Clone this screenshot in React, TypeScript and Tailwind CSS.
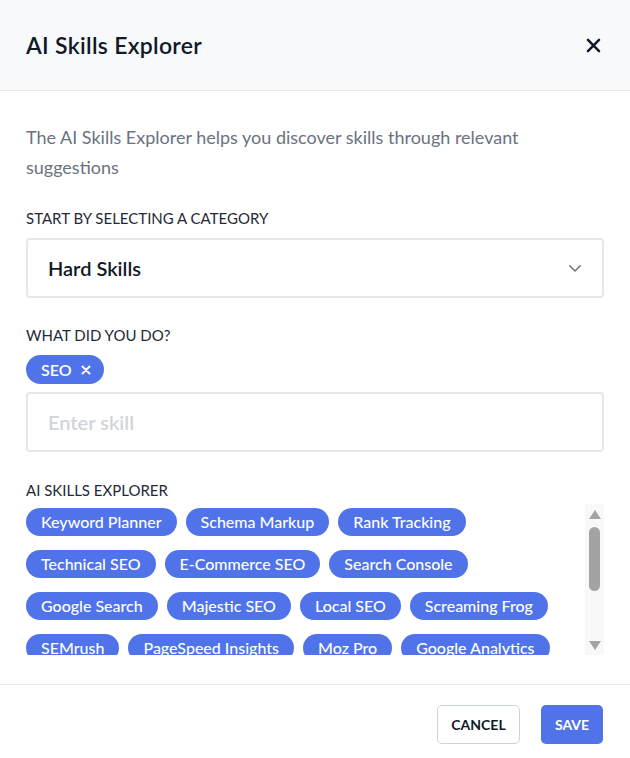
import { useState } from "react";

const suggestions = [
  "Keyword Planner",
  "Schema Markup",
  "Rank Tracking",
  "Technical SEO",
  "E-Commerce SEO",
  "Search Console",
  "Google Search",
  "Majestic SEO",
  "Local SEO",
  "Screaming Frog",
  "SEMrush",
  "PageSpeed Insights",
  "Moz Pro",
  "Google Analytics",
  "Link Building",
  "Content Strategy",
];

function CloseIcon({ className, strokeWidth = 3.2 }: { className?: string; strokeWidth?: number }) {
  return (
    <svg viewBox="0 0 24 24" fill="none" stroke="currentColor" strokeWidth={strokeWidth} strokeLinecap="round" className={className}>
      <path d="M5 5l14 14M19 5L5 19" />
    </svg>
  );
}

export default function App() {
  const [skills, setSkills] = useState<string[]>(["SEO"]);

  return (
    <div className="w-[630px] h-[758px] bg-white flex flex-col text-[#1f2937]" style={{ fontFamily: "Lato, 'Noto Sans', sans-serif" }}>
      {/* Header */}
      <div className="h-[91px] shrink-0 bg-[#f8f9fb] border-b border-[#e5e7eb] flex items-center justify-between pl-[26px] pr-[27px]">
        <h2 className="text-[23px] font-semibold text-[#111827] tracking-[0.3px]">AI Skills Explorer</h2>
        <button className="text-[#111827]">
          <CloseIcon className="w-[19px] h-[19px]" />
        </button>
      </div>

      {/* Body */}
      <div className="flex-1 px-[26px] pt-[31px] flex flex-col">
        <p className="text-[18px] leading-[30px] text-[#6b7280]">
          The AI Skills Explorer helps you discover skills through relevant suggestions
        </p>

        <label className="mt-[26px] text-[15px] leading-[20px] uppercase text-[#1f2937]">
          Start by selecting a category
        </label>
        <div className="mt-[10px] h-[60px] border-2 border-[#e5e7eb] rounded-[4px] flex items-center justify-between pl-[20px] pr-[18px]">
          <span className="text-[20px] font-semibold text-[#111827]">Hard Skills</span>
          <svg viewBox="0 0 24 24" fill="none" stroke="#6b7280" strokeWidth={2} strokeLinecap="round" strokeLinejoin="round" className="w-[18px] h-[18px]">
            <path d="M5 9l7 7 7-7" />
          </svg>
        </div>

        <label className="mt-[27px] text-[15px] leading-[20px] uppercase text-[#1f2937]">
          What did you do?
        </label>
        <div className="mt-[10px] flex gap-2">
          {skills.map((s) => (
            <span key={s} className="h-[29px] pl-[15px] pr-[12px] rounded-full bg-[#5073ea] text-white text-[16px] font-semibold flex items-center gap-[8px]">
              {s}
              <button onClick={() => setSkills(skills.filter((x) => x !== s))}>
                <CloseIcon className="w-[12px] h-[12px]" strokeWidth={3.8} />
              </button>
            </span>
          ))}
        </div>
        <div className="mt-[8px] h-[60px] border-2 border-[#e5e7eb] rounded-[4px] flex items-center pl-[20px]">
          <input
            placeholder="Enter skill"
            className="w-full outline-none text-[20px] font-semibold placeholder:text-[#d1d5db]"
          />
        </div>

        <label className="mt-[28px] text-[15px] leading-[20px] uppercase text-[#1f2937]">
          AI Skills Explorer
        </label>
        <div className="mt-[4px] flex h-[151px]">
          <div className="flex-1 overflow-hidden pt-[4px]">
            <div className="flex flex-wrap gap-x-[9px] gap-y-[14px]">
              {suggestions.map((s) => (
                <button
                  key={s}
                  className="h-[28px] px-[15px] rounded-full bg-[#5073ea] text-white text-[16px] font-medium leading-none"
                >
                  {s}
                </button>
              ))}
            </div>
          </div>
          {/* scrollbar */}
          <div className="w-[19px] shrink-0 bg-[#f8f8f8] flex flex-col items-center pt-[6px] pb-[5px]">
            <svg viewBox="0 0 12 9" className="w-[12px] h-[9px]" fill="#a3a3a3">
              <path d="M6 0l6 9H0z" />
            </svg>
            <div className="mt-[8px] w-[11px] h-[64px] rounded-full bg-[#a3a3a3]" />
            <div className="flex-1" />
            <svg viewBox="0 0 12 9" className="w-[12px] h-[9px]" fill="#a3a3a3">
              <path d="M0 0h12L6 9z" />
            </svg>
          </div>
        </div>
      </div>

      {/* Footer */}
      <div className="h-[74px] shrink-0 border-t border-[#e5e7eb] flex items-start justify-end gap-[21px] pt-[20px] pr-[27px]">
        <button className="w-[83px] h-[39px] rounded-[5px] border border-[#cbd5e1] text-[14px] font-bold text-[#111827] uppercase">
          Cancel
        </button>
        <button className="w-[62px] h-[39px] rounded-[5px] bg-[#5073ea] text-[14px] font-bold text-white uppercase">
          Save
        </button>
      </div>
    </div>
  );
}
